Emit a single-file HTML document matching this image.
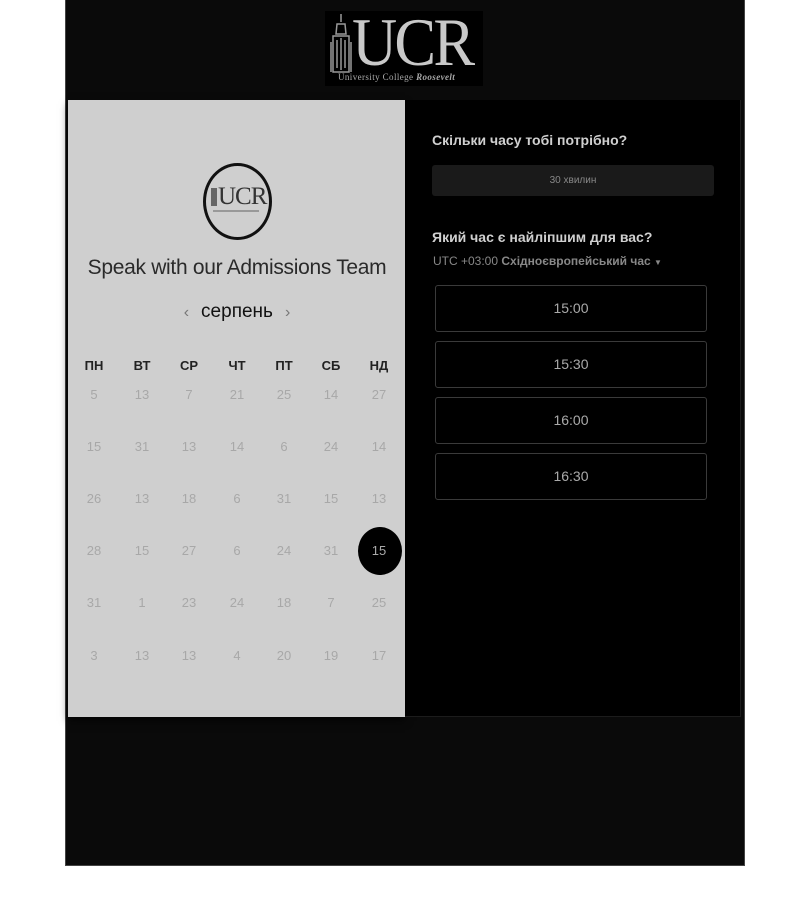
<!DOCTYPE html>
<html><head><meta charset="utf-8"><style>
*{margin:0;padding:0;box-sizing:border-box}
body{width:800px;height:900px;background:#fff;position:relative;font-family:"Liberation Sans","DejaVu Sans",sans-serif;overflow:hidden}
.a{position:absolute}
#bg{left:65px;top:0;width:680px;height:866px;background:#0a0a0a;border:1px solid #444;border-top:none}
#left{left:68px;top:100px;width:337px;height:617px;background:#cfcfcf;box-shadow:0 4px 8px rgba(0,0,0,.6)}
#right{left:405px;top:100px;width:336px;height:617px;background:#000;border-right:1px solid #1c1c1c;border-bottom:1px solid #1c1c1c}
.c{text-align:center;transform:translateX(-50%)}
.h{font-weight:bold;font-size:13px;color:#222}
.d{font-size:13px;color:#a8a8a8}
.slot{left:435px;width:272px;height:47px;border:1px solid #3a3a3a;border-radius:3px;color:#aaa;font-size:14px;text-align:center;line-height:45px}
</style></head><body>
<div id="bg" class="a"></div>
<div class="a" style="left:325px;top:11px;width:158px;height:75px;background:#000"></div>
<svg class="a" style="left:327px;top:12px" width="28" height="64" viewBox="0 0 28 64"><path d="M14 2 L14 10 M10 12 L18 12 L19 22 L9 22 Z M6 24 L22 24 L22 60 L6 60 Z M4 30 L4 60 M24 30 L24 60 M10 28 L10 56 M18 28 L18 56 M14 26 L14 58" stroke="#999" stroke-width="1.5" fill="none"/></svg>
<div class="a" style="left:352px;top:4px;font-family:'Liberation Serif',serif;font-size:68px;color:#c9c9c9;letter-spacing:-3px;line-height:76px;transform:scaleX(.92);transform-origin:left">UCR</div>
<div class="a" style="left:338px;top:72px;font-family:'Liberation Serif',serif;font-size:9px;color:#aaa;white-space:nowrap;letter-spacing:.4px">University College <i><b>Roosevelt</b></i></div>

<div id="left" class="a"></div>
<div id="right" class="a"></div>

<div class="a" style="left:203px;top:163px;width:69px;height:77px;border:3px solid #111;border-radius:50%"></div>
<div class="a" style="left:218px;top:183px;font-family:'Liberation Serif',serif;font-size:25px;color:#333;letter-spacing:-1px">UCR</div>
<div class="a" style="left:211px;top:188px;width:6px;height:18px;background:#666"></div>
<div class="a" style="left:213px;top:210px;width:46px;height:2px;background:#999"></div>

<div class="a c" style="left:237px;top:256px;font-size:21px;color:#2a2a2a;white-space:nowrap;letter-spacing:-.3px">Speak with our Admissions Team</div>
<div class="a c" style="left:237px;top:301px;font-size:19px;color:#111;white-space:nowrap"><span style="color:#777;font-size:16px;margin-right:12px">‹</span>серпень<span style="color:#777;font-size:16px;margin-left:12px">›</span></div>

<div class="a" style="left:358px;top:527px;width:44px;height:48px;border-radius:50%;background:#000"></div>

<div id="cal"></div>
<script>
var xs=[94,142,189,237,284,331,379],hs=["ПН","ВТ","СР","ЧТ","ПТ","СБ","НД"];
var rows=[[5,13,7,21,25,14,27],[15,31,13,14,6,24,14],[26,13,18,6,31,15,13],[28,15,27,6,24,31,15],[31,1,23,24,18,7,25],[3,13,13,4,20,19,17]];
var ys=[395,447,499,551,603,656],h="";
for(var i=0;i<7;i++)h+='<div class="a c h" style="left:'+xs[i]+'px;top:358px">'+hs[i]+'</div>';
for(var r=0;r<6;r++)for(var i=0;i<7;i++){var sel=(r==3&&i==6);h+='<div class="a c d" style="left:'+xs[i]+'px;top:'+(ys[r]-8)+'px;'+(sel?'color:#aaa':'')+'">'+rows[r][i]+'</div>';}
document.getElementById('cal').innerHTML=h;
</script>

<div class="a" style="left:432px;top:132px;font-size:14px;font-weight:bold;color:#d0d0d0">Скільки часу тобі потрібно?</div>
<div class="a" style="left:432px;top:165px;width:282px;height:31px;background:#1a1a1a;border-radius:3px;color:#888;font-size:10px;text-align:center;line-height:31px">30 хвилин</div>
<div class="a" style="left:432px;top:229px;font-size:14px;font-weight:bold;color:#d0d0d0">Який час є найліпшим для вас?</div>
<div class="a" style="left:433px;top:254px;font-size:12px;color:#888;white-space:nowrap">UTC +03:00 <b>Східноєвропейський час</b> <span style="font-size:8px">▼</span></div>
<div class="a slot" style="top:285px">15:00</div>
<div class="a slot" style="top:341px">15:30</div>
<div class="a slot" style="top:397px">16:00</div>
<div class="a slot" style="top:453px">16:30</div>
</body></html>
